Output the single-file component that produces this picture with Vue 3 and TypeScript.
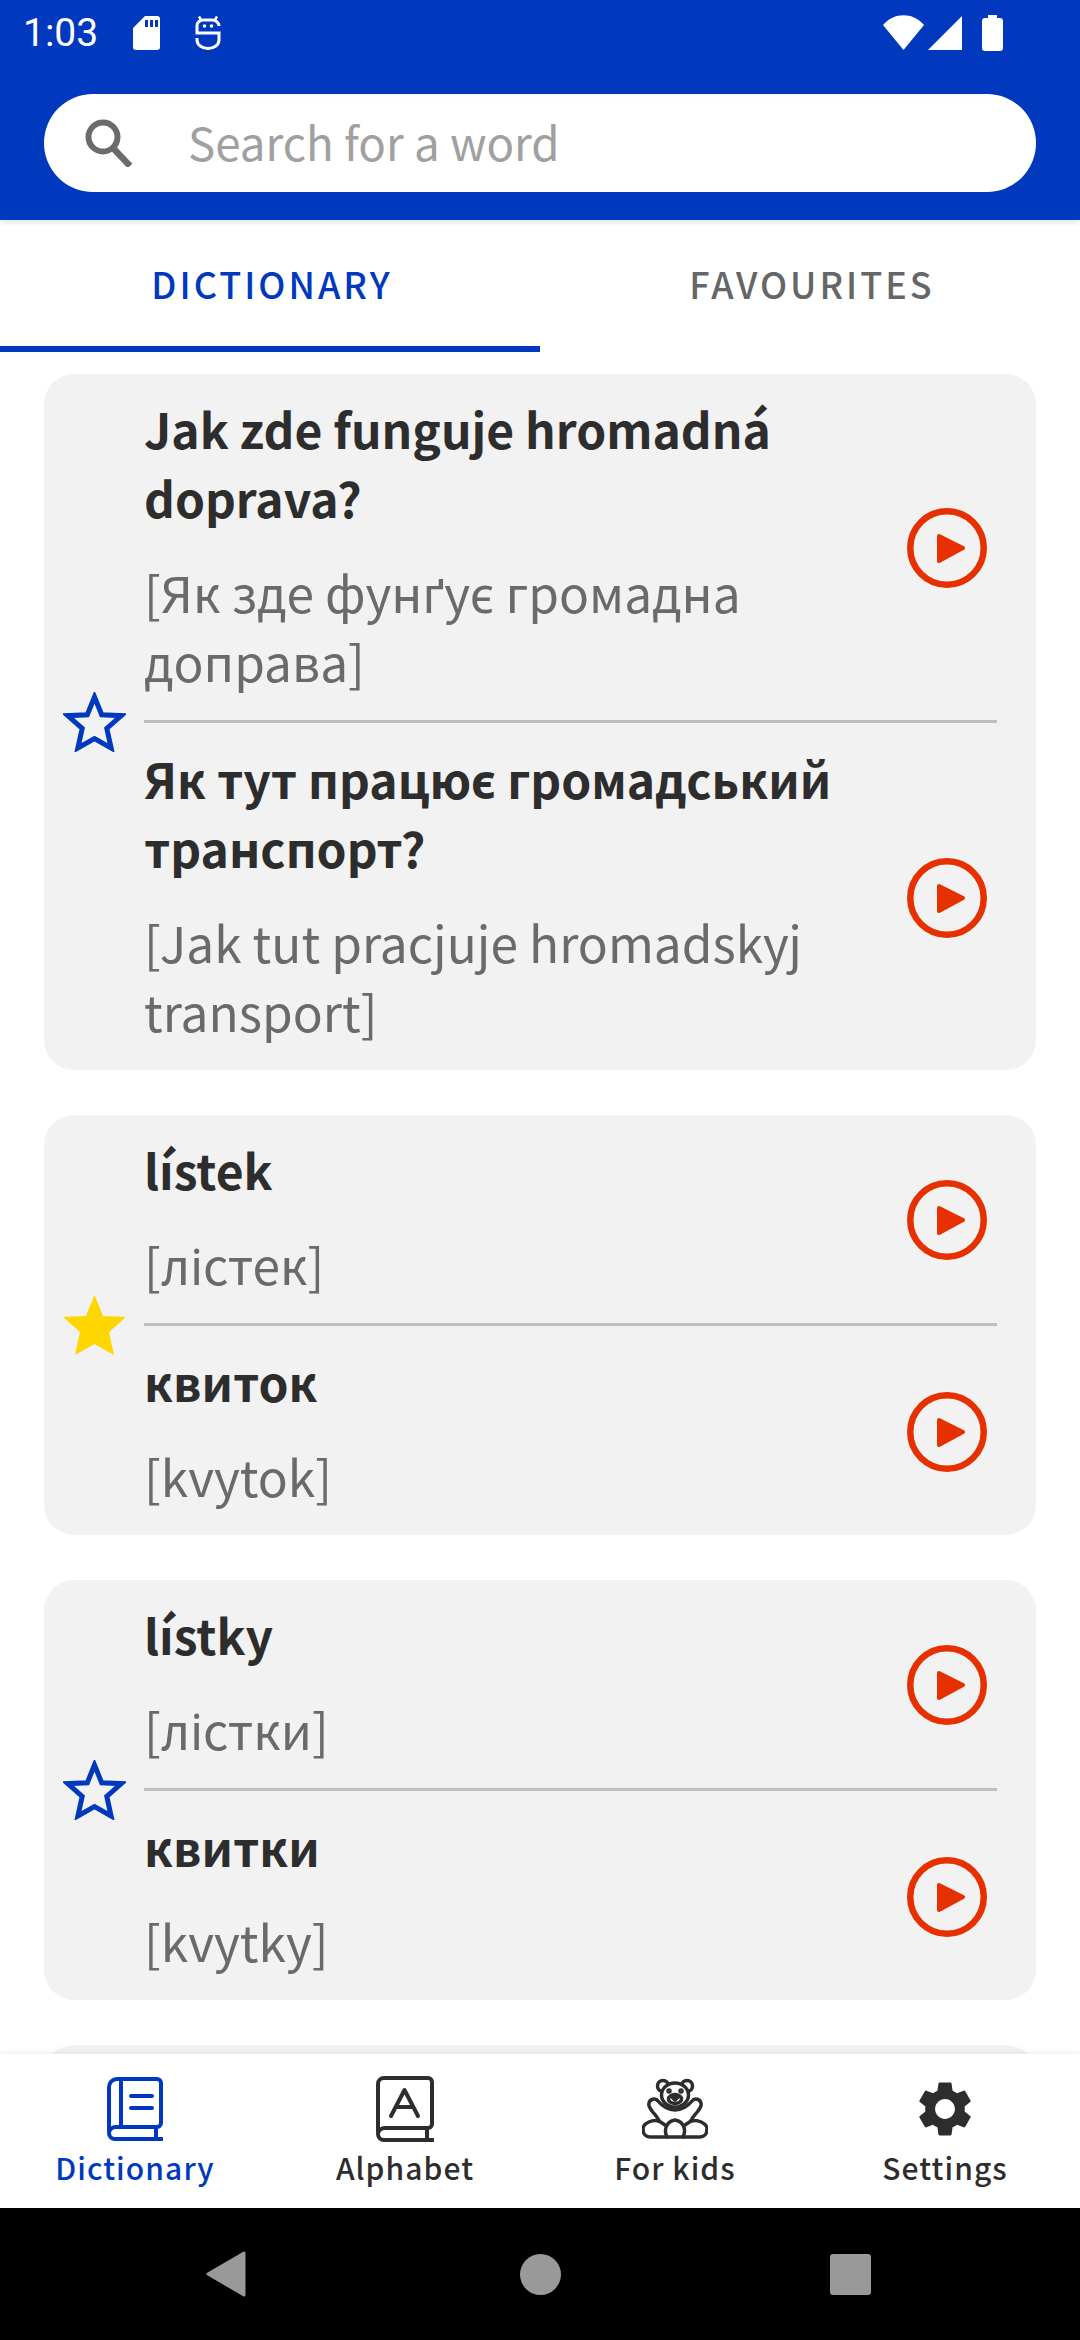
<script setup lang="ts">
interface Phrase {
  word: string
  reading: string
}
interface Entry {
  favourite: boolean
  rows: Phrase[]
}

const entries: Entry[] = [
  {
    favourite: false,
    rows: [
      { word: 'Jak zde funguje hromadná doprava?', reading: '[Як зде фунґує громадна доправа]' },
      { word: 'Як тут працює громадський транспорт?', reading: '[Jak tut pracjuje hromadskyj transport]' },
    ],
  },
  {
    favourite: true,
    rows: [
      { word: 'lístek', reading: '[лістек]' },
      { word: 'квиток', reading: '[kvytok]' },
    ],
  },
  {
    favourite: false,
    rows: [
      { word: 'lístky', reading: '[лістки]' },
      { word: 'квитки', reading: '[kvytky]' },
    ],
  },
]
</script>

<template>
  <div class="screen">
    <!-- Status bar + search -->
    <header class="top">
      <div class="status">
        <span class="clock">1:03</span>
        <svg class="st-sd" width="27" height="34" viewBox="0 0 27 34" fill="#fff">
          <path fill-rule="evenodd" d="M12 0H24a3 3 0 0 1 3 3V31a3 3 0 0 1-3 3H3a3 3 0 0 1-3-3V12ZM12 4V11H15V4ZM17 4V11H20V4ZM22 4V11H25V4Z" />
        </svg>
        <svg class="st-bot" width="26" height="34" viewBox="0 0 26 34" fill="none" stroke="#fff" stroke-width="3">
          <path d="M4 0.500 6.500 4.500M22 0.500 19.500 4.500" stroke-width="2.500" />
          <path d="M24 10C24 6 20 4 17 4H9C5 4 2 6 2 10V17H24V24A11 8.500 0 0 1 2 24V22" />
          <circle cx="9.500" cy="10" r="1.800" fill="#fff" stroke="none" />
          <circle cx="16.500" cy="10" r="1.800" fill="#fff" stroke="none" />
        </svg>
        <span class="st-space"></span>
        <svg width="41" height="35" viewBox="0 0 41 35" fill="#fff">
          <path d="M0 10C11-3 30-3 41 10L20.500 35Z" />
        </svg>
        <svg class="st-signal" width="34" height="34" viewBox="0 0 34 34" fill="#fff">
          <path d="M34 0V34H0Z" />
        </svg>
        <svg class="st-batt" width="21" height="36" viewBox="0 0 21 36" fill="#fff">
          <path d="M6 0H15V3H18a3 3 0 0 1 3 3V33a3 3 0 0 1-3 3H3a3 3 0 0 1-3-3V6a3 3 0 0 1 3-3H6Z" />
        </svg>
      </div>
      <div class="search">
        <svg class="search-icon" width="48" height="48" viewBox="0 0 48 48" fill="none" stroke="#6b6b6b">
          <circle cx="18" cy="18" r="14.500" stroke-width="6" />
          <path d="M28 29 45 47" stroke-width="6.500" />
        </svg>
        <span class="search-text">Search for a word</span>
      </div>
    </header>

    <!-- Tabs -->
    <nav class="tabs">
      <div class="tab tab-active">DICTIONARY</div>
      <div class="tab">FAVOURITES</div>
    </nav>

    <!-- Word list -->
    <main class="list">
      <section v-for="(entry, i) in entries" :key="i" class="card">
        <div class="star-col">
          <svg width="63" height="60" viewBox="0 0 63 60">
            <path
              v-if="entry.favourite"
              d="M31.500 0 40 21 63 22 46 37 51 60 31.500 49 12 60 17 37 0 22 23 21Z"
              fill="#ffd600"
            />
            <path
              v-else
              d="M31.500 5 38.700 22.800 58.300 23.650 43.800 36.400 48.100 56 31.500 46.600 14.900 56 19.200 36.400 4.700 23.650 24.300 22.800Z"
              fill="none"
              stroke="#0039be"
              stroke-width="5"
            />
          </svg>
        </div>
        <div class="rows">
          <div v-for="row in entry.rows" :key="row.word" class="row">
            <div class="texts">
              <div class="word">{{ row.word }}</div>
              <div class="reading">{{ row.reading }}</div>
            </div>
            <svg class="play" width="80" height="80" viewBox="0 0 80 80">
              <circle cx="40" cy="40" r="36.750" fill="none" stroke="#e63000" stroke-width="6.500" />
              <path d="M32 28 56 40 32 53Z" fill="#e63000" stroke="#e63000" stroke-width="4" stroke-linejoin="round" />
            </svg>
          </div>
        </div>
      </section>
      <section class="card card-next"></section>
    </main>

    <!-- Bottom navigation -->
    <nav class="bottom">
      <div class="item item-active">
        <svg class="item-icon" width="56" height="64" viewBox="0 0 56 64" fill="none" stroke="#0039be" stroke-width="4" stroke-linecap="round">
          <path d="M2 54V10a8 8 0 0 1 8-8H50a4 4 0 0 1 4 4V46a4 4 0 0 1-4 4H9a7 6 0 0 0-7 6 6 6 0 0 0 6 6H55" />
          <path d="M14 2V50M49 50V61M24 19H45M24 31H45" />
        </svg>
        <span>Dictionary</span>
      </div>
      <div class="item">
        <svg class="item-icon" width="58" height="66" viewBox="0 0 58 66" fill="none" stroke="#2d2d2d" stroke-width="4" stroke-linecap="round" stroke-linejoin="round">
          <path d="M2 56V8a6 6 0 0 1 6-6H52a4 4 0 0 1 4 4V48a4 4 0 0 1-4 4H9a7 6 0 0 0-7 6 6 6 0 0 0 6 6H57" />
          <path d="M51 52V63M15 40 28.500 14 42 40M20 31H37" />
        </svg>
        <span>Alphabet</span>
      </div>
      <div class="item">
        <svg class="item-icon" width="66" height="60" viewBox="0 0 66 60" fill="none" stroke="#2d2d2d" stroke-width="3.500" stroke-linecap="round" stroke-linejoin="round">
          <circle cx="21" cy="7" r="5.500" />
          <circle cx="45" cy="7" r="5.500" />
          <ellipse cx="33" cy="16" rx="13.500" ry="12" fill="#fff" />
          <ellipse cx="33" cy="20" rx="6.500" ry="4.500" />
          <circle cx="27" cy="12" r="1" fill="#2d2d2d" />
          <circle cx="39" cy="12" r="1" fill="#2d2d2d" />
          <path d="M30 18H36L33 21Z" fill="#2d2d2d" />
          <path d="M15 21C20 27 26 31 33 31 40 31 46 27 51 21 53 19 58 20 59 24 60 27 58 29 56 32 53 36 50 38 49 42" />
          <path d="M15 21C13 19 8 20 7 24 6 27 8 29 10 32 13 36 16 38 17 42" />
          <path d="M17 42C11 40 1 44 1 50 1 55 4 58 8 58H58C62 58 65 55 65 50 65 44 55 40 49 42" />
          <path d="M25 58C22 52 23 43 33 41 43 43 44 52 41 58" />
          <path d="M17 42 23 46M49 42 43 46" />
        </svg>
        <span>For kids</span>
      </div>
      <div class="item">
        <svg class="item-icon" width="66" height="66" viewBox="0 0 24 24" fill="#2d2d2d">
          <path d="M19.14 12.94c.04-.3.06-.61.06-.94 0-.32-.02-.64-.07-.94l2.03-1.58c.18-.14.23-.41.12-.61l-1.92-3.32c-.12-.22-.37-.29-.59-.22l-2.39.96c-.5-.38-1.03-.7-1.62-.94l-.36-2.54c-.04-.24-.24-.41-.48-.41h-3.84c-.24 0-.43.17-.47.41l-.36 2.54c-.59.24-1.13.57-1.62.94l-2.39-.96c-.22-.08-.47 0-.59.22L2.74 8.87c-.12.21-.08.47.12.61l2.03 1.58c-.05.3-.09.63-.09.94s.02.64.07.94l-2.03 1.58c-.18.14-.23.41-.12.61l1.92 3.32c.12.22.37.29.59.22l2.39-.96c.5.38 1.03.7 1.62.94l.36 2.54c.05.24.24.41.48.41h3.84c.24 0 .44-.17.47-.41l.36-2.54c.59-.24 1.13-.56 1.62-.94l2.39.96c.22.08.47 0 .59-.22l1.92-3.32c.12-.22.07-.47-.12-.61l-2.01-1.58zM12 15.6c-1.98 0-3.6-1.62-3.6-3.6s1.62-3.6 3.6-3.6 3.6 1.62 3.6 3.6-1.62 3.6-3.6 3.6z" />
        </svg>
        <span>Settings</span>
      </div>
    </nav>

    <!-- System navigation -->
    <footer class="sysnav">
      <svg width="40" height="46" viewBox="0 0 40 46" fill="#999">
        <path d="M38 2 V44 L2 23Z" stroke="#999" stroke-width="3" stroke-linejoin="round" />
      </svg>
      <span class="sys-circle"></span>
      <span class="sys-square"></span>
    </footer>
  </div>
</template>

<style>
html,
body {
  margin: 0;
  background: #fff;
}
</style>

<style scoped>
.screen {
  width: 1080px;
  height: 2340px;
  display: flex;
  flex-direction: column;
  overflow: hidden;
  background: #fff;
  font-family: "Noto Sans CJK SC", "Noto Sans", sans-serif;
}

/* ── Header ── */
.top {
  height: 220px;
  flex-shrink: 0;
  box-sizing: border-box;
  background: #0039be;
  padding: 0 44px;
  box-shadow: 0 2px 6px rgba(0, 0, 0, 0.12);
  position: relative;
  z-index: 2;
}

.status {
  height: 94px;
  margin: 0 33px 0 -21px;
  display: flex;
  align-items: flex-start;
  padding-top: 15px;
  box-sizing: border-box;
  color: #fff;
}

.clock {
  font-family: Roboto, sans-serif;
  font-size: 39px;
  line-height: 36px;
  width: 110px;
}

.st-sd,
.st-bot {
  margin-top: 1px;
}

.st-bot {
  margin-left: 35px;
}

.st-space {
  flex: 1;
}

.st-signal {
  margin: 1px 0 0 4px;
}

.st-batt {
  margin-left: 20px;
}

.search {
  height: 98px;
  background: #fff;
  border-radius: 49px;
  display: flex;
  align-items: center;
  padding-left: 41px;
}

.search-icon {
  margin-right: 55px;
}

.search-text {
  font-size: 45.7px;
  line-height: 60px;
  padding-bottom: 5px;
  color: #a0a0a0;
}

/* ── Tabs ── */
.tabs {
  height: 132px;
  flex-shrink: 0;
  display: flex;
}

.tab {
  flex: 1;
  box-sizing: border-box;
  text-align: center;
  font-size: 36px;
  font-weight: 500;
  letter-spacing: 3px;
  line-height: 127px;
  padding-left: 4px;
  color: #666;
}

.tab-active {
  color: #0039be;
  border-bottom: 6px solid #0039be;
}

/* ── List ── */
.list {
  flex: 1;
  min-height: 0;
  overflow: hidden;
  padding: 22px 44px 0;
  display: flex;
  flex-direction: column;
  gap: 45px;
}

.card {
  flex-shrink: 0;
  display: flex;
  align-items: center;
  background: #f2f2f2;
  border-radius: 30px;
  padding-right: 39px;
}

.card-next {
  height: 100px;
}

.star-col {
  width: 100px;
  flex-shrink: 0;
  display: flex;
  justify-content: center;
}

.rows {
  flex: 1;
  min-width: 0;
}

.row {
  display: flex;
  align-items: center;
  padding: 20px 10px 25px 0;
}

.row + .row {
  border-top: 3px solid #bfbfbf;
  padding-top: 21px;
}

.texts {
  flex: 1;
  min-width: 0;
  padding-right: 20px;
  display: flex;
  flex-direction: column;
  gap: 25px;
}

.word {
  font-size: 48px;
  font-weight: 700;
  line-height: 69px;
  color: #2d2d2d;
}

.reading {
  font-size: 49.6px;
  line-height: 69px;
  color: #6a6a6a;
}

.play {
  flex-shrink: 0;
  margin-top: 6px;
}

/* ── Bottom nav ── */
.bottom {
  height: 154px;
  flex-shrink: 0;
  display: flex;
  background: #fff;
  box-shadow: 0 -2px 6px rgba(0, 0, 0, 0.06);
  position: relative;
  z-index: 2;
}

.item {
  flex: 1;
  display: flex;
  flex-direction: column;
  align-items: center;
  color: #2d2d2d;
  font-size: 30px;
  font-weight: 500;
  letter-spacing: 1.05px;
  line-height: 42px;
}

.item-icon {
  height: 66px;
  margin-top: 22px;
  margin-bottom: 4px;
}

.item-active {
  color: #0039be;
}

/* ── System nav ── */
.sysnav {
  height: 132px;
  flex-shrink: 0;
  background: #000;
  display: flex;
  align-items: center;
  position: relative;
  padding-left: 206px;
}

.sys-circle {
  width: 41px;
  height: 41px;
  border-radius: 50%;
  background: #999;
  margin-left: 274px;
}

.sys-square {
  width: 41px;
  height: 41px;
  border-radius: 3px;
  background: #999;
  margin-left: 269px;
}
</style>
